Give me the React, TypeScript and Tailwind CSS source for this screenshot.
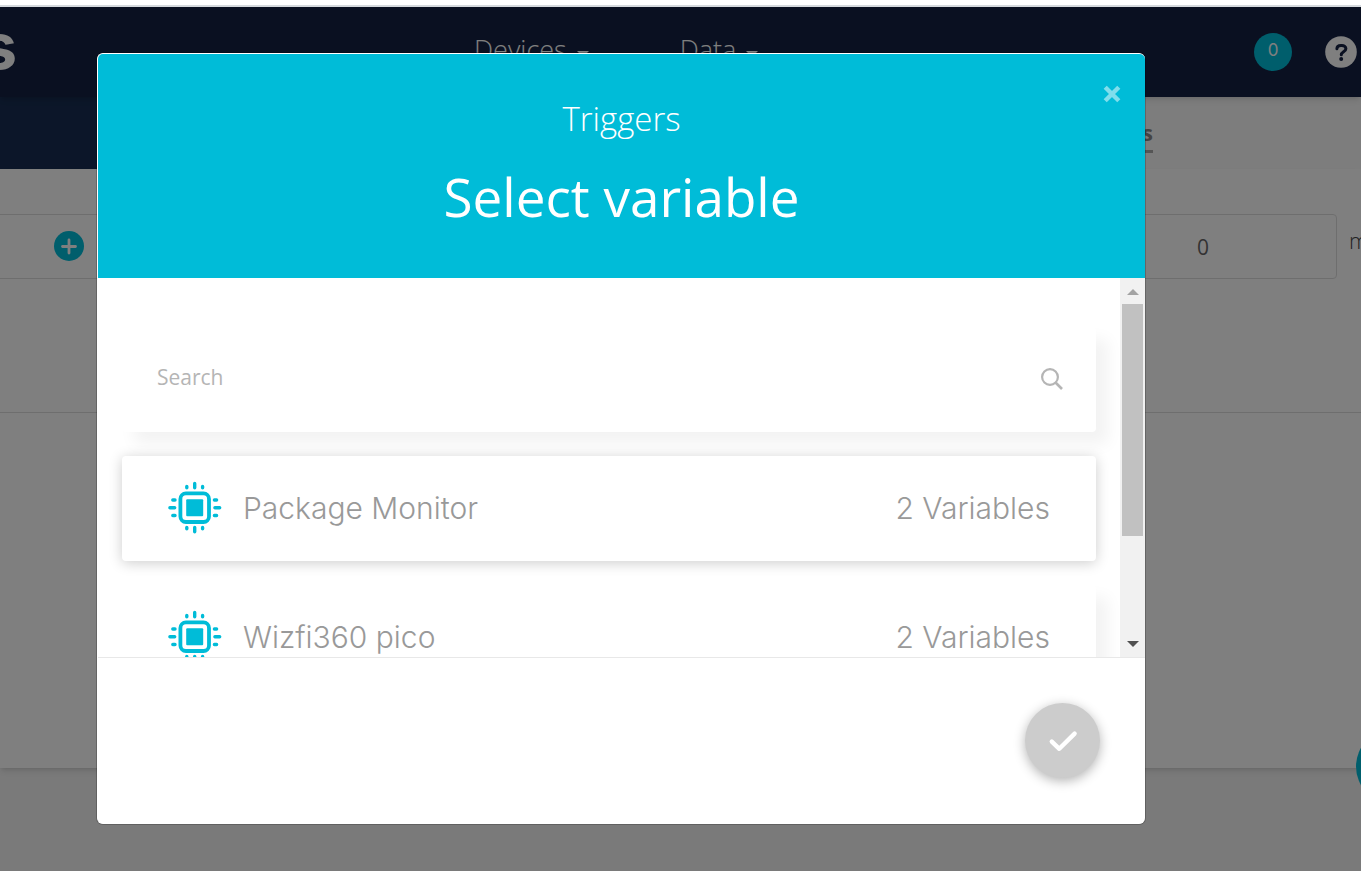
import React, { useState } from 'react';

const devices = [
  { id: 'package-monitor', name: 'Package Monitor', variables: 2 },
  { id: 'wizfi360-pico', name: 'Wizfi360 pico', variables: 2 },
];

const ChipIcon: React.FC = () => (
  <svg viewBox="0 0 54 54" className="h-[54px] w-[54px] shrink-0 text-[#00bcd8]" fill="none" stroke="currentColor" strokeLinecap="round" aria-hidden="true">
    <rect x="12.4" y="12.4" width="28.6" height="28.6" rx="5.5" strokeWidth="3.8" />
    <rect x="18.2" y="18.2" width="17" height="17" rx="1" fill="currentColor" stroke="none" />
    {/* Long pins */}
    <path d="M26.7 2.4v4.4M26.7 46.4v4.4M1.9 26.7h4.8M46.9 26.7h4.8" strokeWidth="3.4" />
    {/* Short pins */}
    <path
      d="M18.8 5.4v1.4M34.6 5.4v1.4M18.8 46.4v1.4M34.6 46.4v1.4M4.8 19h2.2M4.8 34.5h2.2M46.4 19h2.2M46.4 34.5h2.2"
      strokeWidth="3.4"
    />
  </svg>
);

const SearchIcon: React.FC = () => (
  <svg viewBox="0 0 22 22" className="h-[22px] w-[22px]" fill="none" stroke="currentColor" strokeWidth="2.2" aria-hidden="true">
    <circle cx="9" cy="9" r="7.9" />
    <path d="M14.5 14.5L21 21" strokeWidth="2.6" />
  </svg>
);

const CloseIcon: React.FC = () => (
  <svg viewBox="0 0 18 18" className="h-[18px] w-[18px]" fill="none" stroke="currentColor" strokeWidth="4.4" aria-hidden="true">
    <path d="M2.2 2.2L15.8 15.8M15.8 2.2L2.2 15.8" />
  </svg>
);

const CheckIcon: React.FC = () => (
  <svg viewBox="0 0 30 22" className="h-[22px] w-[30px]" fill="none" stroke="currentColor" strokeWidth="4.4" strokeLinecap="round" strokeLinejoin="round" aria-hidden="true">
    <path d="M3.8 11.6L11.3 18.8L26.6 3.6" />
  </svg>
);

const PlusIcon: React.FC = () => (
  <svg viewBox="0 0 30 30" className="h-[30px] w-[30px]" aria-hidden="true">
    <circle cx="15" cy="15" r="15" fill="#00bcd8" />
    <path d="M15 9v13M8.5 15.5h13" stroke="white" strokeWidth="2.8" strokeLinecap="round" />
  </svg>
);

const HelpIcon: React.FC = () => (
  <svg viewBox="0 0 32 32" className="h-8 w-8" fill="none" aria-hidden="true">
    <circle cx="16" cy="16" r="15.8" fill="white" />
    <path
      d="M11.9 12.8c0-2.2 1.7-3.3 4-3.3h1c2.3 0 4 1.3 4 3.2 0 3-4.6 3.2-4.6 6.1"
      stroke="#142143"
      strokeWidth="3"
      strokeLinecap="round"
    />
    <circle cx="16.2" cy="23" r="2" fill="#142143" />
  </svg>
);

const Caret: React.FC = () => (
  <span className="mt-[7px] border-x-[6px] border-t-[6px] border-x-transparent border-t-white" aria-hidden="true" />
);

const Page: React.FC = () => (
  <div className="flex min-h-screen flex-col overflow-hidden bg-[#f4f4f4]">
    <div className="h-[7px] border-b-2 border-[#d6dade] bg-white" />

    {/* Top bar */}
    <header className="relative flex h-[90px] items-center bg-[#142143] pr-1 text-white shadow-md">
      <a href="#home" className="flex w-[17px] justify-end overflow-hidden pb-3 font-['Inter',sans-serif] text-[64px] leading-[78px] font-bold">
        s
      </a>
      <nav className="ml-[457px] flex gap-[91px] pb-1 text-[27px] font-light">
        <a href="#devices" className="flex items-center gap-[10px]">
          Devices <Caret />
        </a>
        <a href="#data" className="flex items-center gap-[10px]">
          Data <Caret />
        </a>
      </nav>
      <div className="ml-auto flex items-center gap-[33px]">
        <span className="flex h-[38px] w-[38px] items-center justify-center rounded-full bg-[#00bcd8] pb-0.5 font-['Inter',sans-serif] text-[17px]">
          0
        </span>
        <button type="button" aria-label="Help">
          <HelpIcon />
        </button>
      </div>
    </header>

    {/* Tabs */}
    <div className="flex h-[72px]">
      <div className="w-1/2 bg-[#182d52]" />
      <div className="flex w-1/2 items-center justify-end bg-[#fafafa] pr-[208px]">
        <a href="#triggers" className="border-b-[3px] border-[#aaa] text-[22px] leading-9 font-bold text-[#888]">
          s
        </a>
      </div>
    </div>

    {/* Trigger form */}
    <main className="h-[599px] bg-white pt-[45px] shadow-md">
      <div className="flex h-[65px]">
        <div className="flex flex-1 items-center border-y border-[#ddd] pb-px pl-[54px]">
          <button type="button" aria-label="Add variable">
            <PlusIcon />
          </button>
        </div>
        <label className="flex items-center">
          <input
            type="text"
            defaultValue="0"
            aria-label="Minutes"
            className="h-full w-[268px] rounded-sm border border-[#ddd] text-center text-[21px] text-[#666]"
          />
          <span className="ml-3 w-3 overflow-hidden pb-3 text-[22px] font-light text-[#444]">m</span>
        </label>
      </div>
      <div className="mt-[133px] border-t border-[#ddd]" />
    </main>
  </div>
);

const Scrollbar: React.FC = () => (
  <div className="flex w-[25px] shrink-0 flex-col items-center justify-between bg-[#f1f1f1] pt-[11px] pb-[10px]" aria-hidden="true">
    <div className="flex flex-col items-center gap-[9px]">
      <div className="border-x-[6px] border-b-[6px] border-x-transparent border-b-[#a3a3a3]" />
      <div className="h-[232px] w-[21px] bg-[#c1c1c1]" />
    </div>
    <div className="border-x-[6px] border-t-[6px] border-x-transparent border-t-[#505050]" />
  </div>
);

const App: React.FC = () => {
  const [query, setQuery] = useState('');
  const [selected, setSelected] = useState('package-monitor');

  const visible = devices.filter((device) => device.name.toLowerCase().includes(query.toLowerCase()));

  return (
    <div className="relative font-['Open_Sans',sans-serif]">
      <Page />

      {/* Page action button, partly off screen */}
      <div className="absolute top-[729px] right-0 w-[5px] overflow-hidden">
        <button type="button" aria-label="Save" className="block h-[75px] w-[75px] rounded-full bg-[#00bcd8]" />
      </div>

      {/* Modal */}
      <div className="absolute inset-x-0 top-[7px] bottom-0 bg-black/50 pt-[46px] pr-[216px] pl-[97px]">
        <div
          role="dialog"
          aria-labelledby="modal-title"
          className="overflow-hidden rounded-md border border-r-0 border-white bg-white shadow-[0_0_0_1px_rgba(0,0,0,0.2)]"
        >
          <div className="relative h-[224px] bg-[#00bcd8] pt-10 text-center text-white">
            <button type="button" aria-label="Close" className="absolute top-[31px] right-6 text-white/50">
              <CloseIcon />
            </button>
            <p className="text-[33px] leading-[50px] font-light">Triggers</p>
            <h1 id="modal-title" className="mt-4 text-[53px] leading-[74px]">
              Select variable
            </h1>
          </div>

          <div className="flex h-[379px] overflow-hidden">
            <div className="flex flex-1 flex-col gap-6 overflow-hidden px-6 pt-[49px]">
              <div className="flex h-[105px] shrink-0 items-center rounded bg-white pr-[33px] pb-0.5 pl-[35px] text-[#b5b5b5] shadow-[12px_12px_16px_rgba(0,0,0,0.05)]">
                <input
                  type="text"
                  value={query}
                  onChange={(e) => setQuery(e.target.value)}
                  placeholder="Search"
                  aria-label="Search"
                  className="min-w-0 flex-1 pb-0.5 text-[21px] text-[#666] outline-none placeholder:text-[#b5b5b5]"
                />
                <SearchIcon />
              </div>

              {visible.map((device) => (
                <button
                  key={device.id}
                  type="button"
                  onClick={() => setSelected(device.id)}
                  className={`flex h-[105px] shrink-0 items-center rounded bg-white px-[46px] pb-0.5 font-['Inter',sans-serif] text-3xl font-light text-[#999] ${
                    selected === device.id
                      ? 'relative shadow-[0_2px_14px_rgba(0,0,0,0.2)]'
                      : 'shadow-[12px_12px_16px_rgba(0,0,0,0.05)]'
                  }`}
                >
                  <ChipIcon />
                  <span className="ml-[21px]">{device.name}</span>
                  <span className="ml-auto">{device.variables} Variables</span>
                </button>
              ))}
            </div>
            <Scrollbar />
          </div>

          <div className="flex h-[166px] items-center justify-end border-t border-[#e8e8e8] pr-[45px]">
            <button
              type="button"
              aria-label="Confirm"
              className="flex h-[75px] w-[75px] items-center justify-center rounded-full bg-[#ccc] text-white shadow-[0_3px_12px_rgba(0,0,0,0.3)]"
            >
              <CheckIcon />
            </button>
          </div>
        </div>
      </div>
    </div>
  );
};

export default App;
